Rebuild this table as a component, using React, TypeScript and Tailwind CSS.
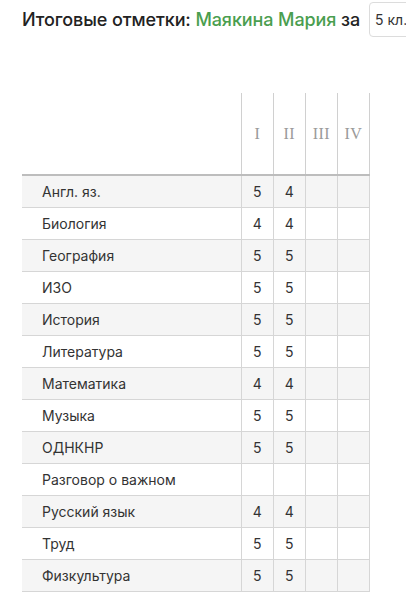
import React from "react";

const rows: [string, string, string][] = [
  ["Англ. яз.", "5", "4"],
  ["Биология", "4", "4"],
  ["География", "5", "5"],
  ["ИЗО", "5", "5"],
  ["История", "5", "5"],
  ["Литература", "5", "5"],
  ["Математика", "4", "4"],
  ["Музыка", "5", "5"],
  ["ОДНКНР", "5", "5"],
  ["Разговор о важном", "", ""],
  ["Русский язык", "4", "4"],
  ["Труд", "5", "5"],
  ["Физкультура", "5", "5"],
];

export default function App() {
  return (
    <div className="w-[406px] h-[609px] overflow-hidden bg-white font-['Inter',sans-serif] text-[#333]">
      <div className="flex items-center h-[39px] pl-[22px] whitespace-nowrap">
        <span className="text-[18px] font-medium text-[#222] tracking-[-0.1px]">
          Итоговые отметки: <span className="text-[#4a9e4f]">Маякина Мария</span> за
        </span>
        <div className="ml-[9px] h-[35px] flex items-center pl-[5px] pr-4 border border-[#dcdcdc] rounded-[4px] text-[14px] text-[#333]">
          5 кл.
        </div>
      </div>
      <table className="ml-[22px] mt-[54px] border-collapse table-fixed w-[348px] text-[14px]">
        <colgroup>
          <col className="w-[219px]" />
          <col className="w-[32px]" />
          <col className="w-[32px]" />
          <col className="w-[32px]" />
          <col className="w-[32px]" />
        </colgroup>
        <thead>
          <tr className="h-[82px] border-b-2 border-[#bdbdbd]">
            <th></th>
            {["I", "II", "III", "IV"].map((n) => (
              <th
                key={n}
                className="border-x border-[#d0d0d0] font-normal text-[16px] text-[#9a9a9a] font-['Liberation_Serif',serif] text-center p-0 tracking-[0.5px]"
              >
                {n}
              </th>
            ))}
          </tr>
        </thead>
        <tbody>
          {rows.map(([s, a, b], i) => (
            <tr key={s} className={`h-[32px] ${i % 2 === 0 ? "bg-[#f5f5f5]" : "bg-white"}`}>
              <td className="border-b border-[#d6d6d6] pl-[20px] p-0">{s}</td>
              <td className="border border-[#d6d6d6] text-center p-0">{a}</td>
              <td className="border border-[#d6d6d6] text-center p-0">{b}</td>
              <td className="border border-[#d6d6d6] p-0"></td>
              <td className="border border-[#d6d6d6] p-0"></td>
            </tr>
          ))}
        </tbody>
      </table>
    </div>
  );
}
